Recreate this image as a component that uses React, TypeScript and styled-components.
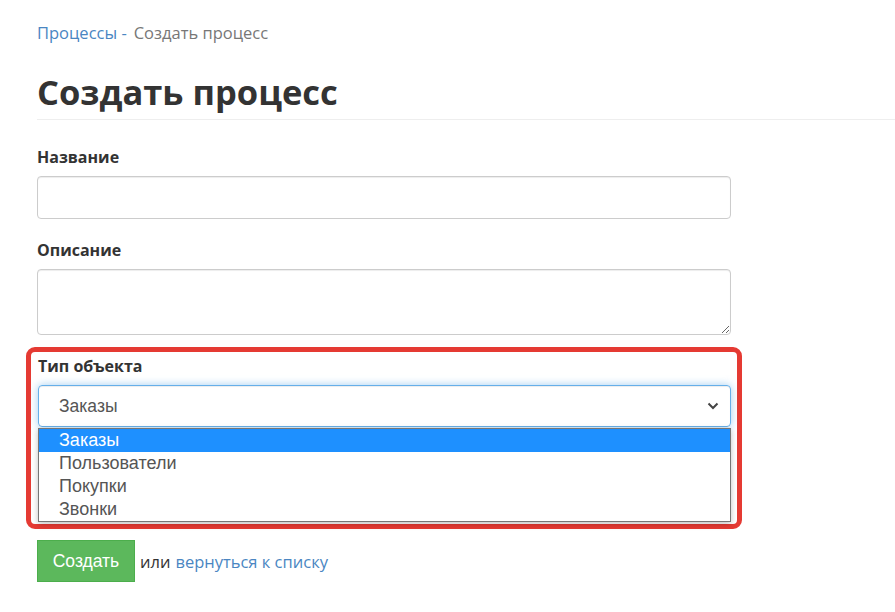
import React from 'react';
import styled, { createGlobalStyle } from 'styled-components';

const GlobalStyle = createGlobalStyle`
  html, body {
    margin: 0;
    padding: 0;
    background: #fff;
  }
  body {
    font-family: "Open Sans", "Liberation Sans", sans-serif;
    color: #333;
  }
  * { box-sizing: border-box; }
`;

const Page = styled.div`
  padding: 23px 0 30px 37px;
`;

const Breadcrumbs = styled.div`
  font-size: 16.5px;
  line-height: 20px;
  color: #777;
`;

const Crumb = styled.a`
  color: #4a86c2;
  text-decoration: none;
  margin-right: 7px;
`;

const Heading = styled.h1`
  margin: 29px 0 0;
  padding-bottom: 7px;
  font-size: 34.5px;
  line-height: 40px;
  font-weight: 700;
  color: #333;
  border-bottom: 1px solid #eee;
`;

const Form = styled.form`
  width: 694px;
  padding-top: 27px;
`;

const Group = styled.div`
  margin-bottom: 21px;
`;

const Label = styled.label`
  display: block;
  font-size: 16px;
  line-height: 21px;
  font-weight: 700;
  color: #333;
  margin-bottom: 8px;
`;

const Input = styled.input`
  display: block;
  width: 100%;
  height: 43px;
  border: 1px solid #ccc;
  border-radius: 4px;
  box-shadow: inset 0 1px 1px rgba(0, 0, 0, 0.075);
  font-size: 16px;
  padding: 6px 12px;
`;

const TextArea = styled.textarea`
  display: block;
  width: 100%;
  height: 66px;
  border: 1px solid #ccc;
  border-radius: 4px;
  box-shadow: inset 0 1px 1px rgba(0, 0, 0, 0.075);
  font-size: 16px;
  padding: 6px 12px;
`;

const Highlight = styled.div`
  margin: -9px -11px 11px -11px;
  padding: 4px 6px 2px 7px;
  border: 5px solid #e53a33;
  border-radius: 9px;
`;

const SelectBox = styled.div`
  display: flex;
  align-items: center;
  justify-content: space-between;
  height: 42px;
  padding: 0 10px 0 20px;
  border: 1px solid #66afe9;
  border-radius: 4px;
  box-shadow: inset 0 1px 1px rgba(0, 0, 0, 0.075), 0 0 8px rgba(102, 175, 233, 0.6);
  font-family: "Liberation Sans", Arial, sans-serif;
  font-size: 17.5px;
  color: #555;
`;

const OptionList = styled.ul`
  list-style: none;
  margin: 1px 0 0;
  padding: 0;
  border: 1px solid #767676;
  box-shadow: 0 2px 6px rgba(0, 0, 0, 0.25);
  background: #fff;
`;

const Option = styled.li<{ $active?: boolean }>`
  height: 23px;
  line-height: 23px;
  padding-left: 20px;
  font-family: "Liberation Sans", Arial, sans-serif;
  font-size: 18px;
  color: ${p => (p.$active ? '#fff' : '#555')};
  background: ${p => (p.$active ? '#1e90ff' : 'transparent')};
`;

const Actions = styled.div`
  display: flex;
  align-items: center;
  font-size: 16.5px;
`;

const SubmitButton = styled.button`
  width: 98px;
  height: 42px;
  border: 1px solid #4cae4c;
  background: #5cb85c;
  color: #fff;
  font-family: "Liberation Sans", Arial, sans-serif;
  font-size: 17.5px;
  margin-right: 5px;
`;

const Link = styled.a`
  color: #4a86c2;
  text-decoration: none;
  margin-left: 5px;
`;

const options = ['Заказы', 'Пользователи', 'Покупки', 'Звонки'];

export default function App() {
  return (
    <>
      <GlobalStyle />
      <Page>
        <Breadcrumbs>
          <Crumb href="#">Процессы -</Crumb>
          Создать процесс
        </Breadcrumbs>
        <Heading>Создать процесс</Heading>
        <Form onSubmit={e => e.preventDefault()}>
          <Group>
            <Label>Название</Label>
            <Input type="text" />
          </Group>
          <Group>
            <Label>Описание</Label>
            <TextArea />
          </Group>
          <Highlight>
            <Label>Тип объекта</Label>
            <SelectBox>
              <span>Заказы</span>
              <svg width="14" height="14" viewBox="0 0 14 14">
                <path d="M2.5 4.5 L7 9 L11.5 4.5" fill="none" stroke="#444" strokeWidth="2" />
              </svg>
            </SelectBox>
            <OptionList>
              {options.map((o, i) => (
                <Option key={o} $active={i === 0}>{o}</Option>
              ))}
            </OptionList>
          </Highlight>
          <Actions>
            <SubmitButton type="submit">Создать</SubmitButton>
            или
            <Link href="#">вернуться к списку</Link>
          </Actions>
        </Form>
      </Page>
    </>
  );
}
